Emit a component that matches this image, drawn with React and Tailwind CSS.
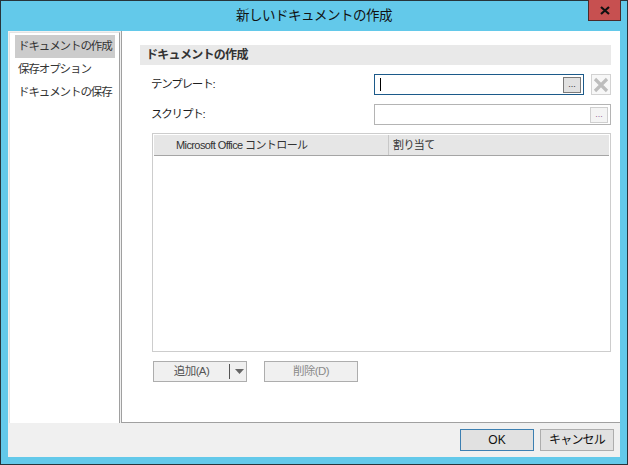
import React from 'react';

const font = "font-['Liberation_Sans','Noto_Sans_CJK_JP',sans-serif]";

const navItems = ['ドキュメントの作成', '保存オプション', 'ドキュメントの保存'];

const EllipsisButton = ({ active }) => (
  <div
    className={`flex items-end justify-center pb-[3px] w-[18px] h-[16px] text-[9px] leading-none ${
      active ? 'bg-[#e1e1e1] border border-[#7a7a7a] text-[#333]' : 'bg-[#f4f4f4] border border-[#cfcfcf] text-[#9a6a9a]'
    }`}
  >
    ...
  </div>
);

const App = () => {
  return (
    <div className={`w-[628px] h-[465px] bg-[#63c9ea] border border-[#27343b] flex flex-col ${font} text-[12px] text-[#1e1e1e] whitespace-nowrap`}>
      {/* title bar */}
      <div className="relative h-[30px] flex items-center justify-center">
        <span className="text-[13.5px] text-[#111] tracking-[-0.5px]">新しいドキュメントの作成</span>
        <div className="absolute top-[-1px] right-[6px] w-[33px] h-[21px] bg-[#c75050] border border-[#4a2a2a] border-t-0 flex items-center justify-center">
          <svg width="10" height="9" viewBox="0 0 10 9">
            <path d="M1 1 L9 8 M9 1 L1 8" stroke="#111" strokeWidth="2.2" />
          </svg>
        </div>
      </div>

      {/* client area */}
      <div className="mx-[7px] mb-[7px] flex-1 bg-[#f0f0f0] flex flex-col">
        <div className="flex-1 flex">
          {/* left nav */}
          <div className="w-[114px] mt-[1px] ml-[1px] bg-white border-l border-t border-[#e3e3e3] border-r-[#a0a0a0] border-r pl-[5px] pr-[4px] pt-[2px]">
            {navItems.map((item, i) => (
              <div
                key={item}
                className={`h-[23px] flex items-center pl-[3px] text-[11.5px] tracking-[-1.1px] text-[#333] overflow-hidden ${
                  i === 0 ? 'bg-[#cccccc]' : ''
                }`}
              >
                {item}
              </div>
            ))}
          </div>

          {/* main panel */}
          <div className="flex-1 ml-[1px] bg-white border-l border-b border-[#a0a0a0] pl-[18px] pr-[9px] pt-[14px] flex flex-col">
            <div className="h-[20px] bg-[#e9e9e9] flex items-center pl-[6px] font-bold text-[12px] tracking-[-0.7px] text-[#333]">
              ドキュメントの作成
            </div>

            <div className="mt-[9px] pl-[11px] flex items-center h-[21px]">
              <div className="w-[223px] text-[11.5px] tracking-[-1.2px]">テンプレート:</div>
              <div className="w-[210px] h-[21px] border border-[#1c5a8a] flex items-center justify-between pl-[5px] pr-[2px]">
                <div className="w-px h-[13px] bg-black" />
                <EllipsisButton active />
              </div>
              <div className="ml-[7px] w-[20px] h-[21px] border border-[#d2d2d2] bg-[#f7f7f7] flex items-center justify-center">
                <svg width="16" height="16" viewBox="0 0 16 16">
                  <path d="M2 2 L14 14 M14 2 L2 14" stroke="#bdbdbd" strokeWidth="3.2" />
                </svg>
              </div>
            </div>

            <div className="mt-[9px] pl-[11px] flex items-center h-[21px]">
              <div className="w-[223px] text-[11.5px] tracking-[-1.2px]">スクリプト:</div>
              <div className="flex-1 h-[21px] border border-[#b4b4b4] flex items-center justify-end pr-[2px]">
                <EllipsisButton />
              </div>
            </div>

            <div className="mt-[8px] ml-[12px] h-[219px] border border-[#cdcdcd] p-px">
              <div className="h-[21px] bg-[#e6e6e6] border-b border-[#a5a5a5] flex text-[11px] text-[#333]">
                <div className="w-[235px] border-r border-[#c8c8c8] flex items-center pl-[22px] tracking-[-0.6px]">
                  Microsoft Office コントロール
                </div>
                <div className="flex items-center pl-[4px] tracking-[-0.6px]">割り当て</div>
              </div>
            </div>

            <div className="mt-[9px] ml-[13px] flex gap-[17px]">
              <div className="w-[94px] h-[21px] border border-[#adadad] bg-[#f0f0f0] flex items-center text-[11.5px] text-[#555]">
                <div className="w-[75px] text-center tracking-[-0.6px]">追加(A)</div>
                <div className="w-px h-[15px] bg-[#555]" />
                <svg className="ml-[5px]" width="9" height="5" viewBox="0 0 9 5">
                  <path d="M0 0 L9 0 L4.5 5 Z" fill="#666" />
                </svg>
              </div>
              <div className="w-[94px] h-[21px] border border-[#adadad] bg-[#f0f0f0] flex items-center justify-center text-[11.5px] text-[#8a8a8a] tracking-[-0.6px]">
                削除(D)
              </div>
            </div>
          </div>
        </div>

        {/* footer */}
        <div className="h-[34px] flex items-start justify-end gap-[6px] pr-[6px] pt-[6px]">
          <div className="w-[74px] h-[22px] border border-[#3c7fb1] bg-[#e1e1e1] flex items-center justify-center text-[12px] text-[#111]">
            OK
          </div>
          <div className="w-[74px] h-[22px] border border-[#adadad] bg-[#e1e1e1] flex items-center justify-center text-[12px] text-[#111] tracking-[-0.8px]">
            キャンセル
          </div>
        </div>
      </div>
    </div>
  );
};

export default App;
